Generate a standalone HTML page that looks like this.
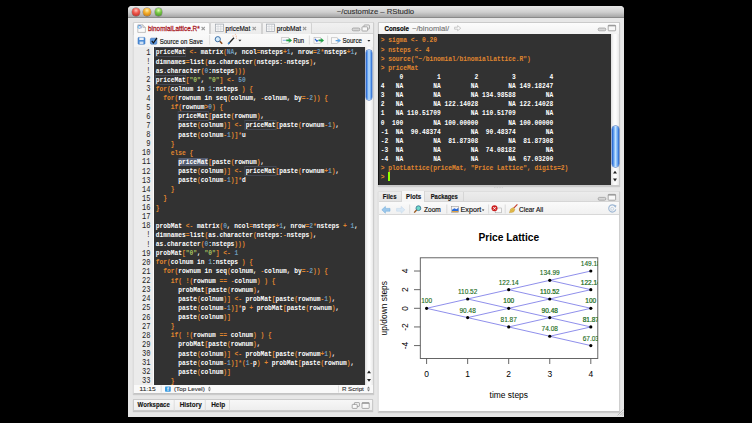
<!DOCTYPE html>
<html><head><meta charset="utf-8">
<style>
*{box-sizing:border-box}
html,body{margin:0;padding:0}
body{width:752px;height:423px;background:#000;position:relative;overflow:hidden;font-family:"Liberation Sans",sans-serif}
.a{position:absolute}
i{font-style:normal}
#win{left:128px;top:6px;width:496px;height:410.5px;background:#e7e7e7;border-radius:4px 4px 0 0}
#title{left:128px;top:6px;width:496px;height:11.6px;background:linear-gradient(#e6e6e6,#cfcfcf 55%,#a7a7a7);border-radius:4px 4px 0 0;border-bottom:1px solid #8a8a8a}
.btn{width:7.8px;height:7.8px;border-radius:50%;top:8px;box-shadow:0 0 0 0.4px rgba(0,0,0,.45)}
.pane{border:1px solid #cacaca}
.tab{height:12px;border:1px solid #d2d2d2;border-bottom:none;border-radius:2px 2px 0 0}
.mono{font-family:"Liberation Mono",monospace;font-size:6.25px;line-height:9.12px;white-space:pre}
.big pre{font-size:7.4px !important;transform:scaleX(0.8446);transform-origin:0 0}
#code{left:154px;top:46.8px;width:211px;height:337.8px;background:#323232;color:#fff;overflow:hidden;font-weight:bold}
#code pre{margin:0;padding:1.6px 0 0 2px;font:inherit}
#gutter{left:133.6px;top:46.8px;width:20.4px;height:337.8px;background:#ebebeb;border-right:1px solid #fbfbfb;color:#222;text-align:right;overflow:hidden}
#gutter pre{margin:0;padding:1.1px 0 0 0;font:inherit;font-size:8.2px;width:16.5px;text-align:right;font-weight:normal;transform:scaleX(0.86);transform-origin:100% 0}
.k{color:#E0862F}.n{color:#6C99BB}.s{color:#A5C261}
.bx{outline:0.8px solid rgba(90,100,126,.45)}
.sel{background:#555d71}
#console{left:378px;top:34px;width:233px;height:151px;background:#323232;color:#fff;overflow:hidden;font-weight:bold;border-left:1px solid #151515}
#console pre{margin:0;padding:2.4px 0 0 2.2px;font:inherit}
.sb{background:linear-gradient(90deg,#dedede,#fafafa 35%,#fdfdfd 60%,#e8e8e8)}
.thumb{border-radius:3.5px;background:linear-gradient(90deg,#1d58c8,#5c9cee 22%,#bfe0ff 50%,#6aa8f2 78%,#2260cc);box-shadow:0 0 0 0.4px #2a5ab0}
svg text{font-family:"Liberation Sans",sans-serif}
</style></head><body>
<div id="win" class="a"></div>
<div id="title" class="a"></div>
<div class="a btn" style="left:132.2px;background:radial-gradient(circle at 50% 30%,#ffc4bc 0,#f05a4e 40%,#b0201a 100%)"></div>
<div class="a btn" style="left:143.2px;background:radial-gradient(circle at 50% 30%,#fff0b0 0,#f6b02c 40%,#b86a0a 100%)"></div>
<div class="a btn" style="left:154.6px;background:radial-gradient(circle at 50% 30%,#e0ffb0 0,#7cc84a 40%,#3a8a1a 100%)"></div>

<!-- LEFT SOURCE PANE -->
<div class="a pane" style="left:133px;top:22px;width:240.5px;height:371.8px;background:#fafafa;box-shadow:0 1px 1px rgba(0,0,0,.12);border-color:#d8d8d8 #cdcdcd #c4c4c4 #dcdcdc"></div>
<div class="a" style="left:134px;top:23px;width:238.5px;height:10.6px;background:linear-gradient(#f1f1f1,#e9e9e9);border-bottom:1px solid #d2d2d2"></div>
<div class="a tab" style="left:133px;top:22px;width:77.2px;height:12.6px;background:linear-gradient(#fdfdfd,#f8f8f8)"></div>
<div class="a tab" style="left:210.2px;top:22.4px;width:51.4px;background:linear-gradient(#f4f4f4,#ebebeb)"></div>
<div class="a tab" style="left:261.6px;top:22.4px;width:50px;background:linear-gradient(#f4f4f4,#ebebeb)"></div>
<div class="a" style="left:134px;top:33.8px;width:238.5px;height:13px;background:linear-gradient(#fafafa,#f3f3f3)"></div>

<div id="gutter" class="a mono"><pre>1
!
!
2
3
4
5
6
7
8
9
10
11
12
13
14
15
16
17
18
!
!
19
20
21
22
23
24
25
26
27
28
29
30
31
32
33</pre></div>
<div id="code" class="a mono big"><pre><i class="bx">priceMat</i> <i class="k">&lt;-</i> matrix<i class="k">(</i><i class="n">NA</i>, ncol<i class="k">=</i>nsteps<i class="k">+</i><i class="n">1</i>, nrow<i class="k">=</i><i class="n">2</i><i class="k">*</i>nsteps<i class="k">+</i><i class="n">1</i>,
dimnames<i class="k">=</i>list<i class="k">(</i>as.character<i class="k">(</i>nsteps:<i class="k">-</i>nsteps<i class="k">)</i>,
as.character<i class="k">(</i><i class="n">0</i>:nsteps<i class="k">)</i><i class="k">)</i><i class="k">)</i>
<i class="bx">priceMat</i><i class="k">[</i><i class="s">&quot;0&quot;</i>, <i class="s">&quot;0&quot;</i><i class="k">]</i> <i class="k">&lt;-</i> <i class="n">50</i>
<i class="k">for</i><i class="k">(</i>colnum in <i class="n">1</i>:nsteps <i class="k">)</i> <i class="k">{</i>
  <i class="k">for</i><i class="k">(</i>rownum in seq<i class="k">(</i>colnum, <i class="k">-</i>colnum, by<i class="k">=</i><i class="k">-</i><i class="n">2</i><i class="k">)</i><i class="k">)</i> <i class="k">{</i>
    <i class="k">if</i><i class="k">(</i>rownum<i class="k">&gt;</i><i class="n">0</i><i class="k">)</i> <i class="k">{</i>
      <i class="bx">priceMat</i><i class="k">[</i>paste<i class="k">(</i>rownum<i class="k">)</i>,
      paste<i class="k">(</i>colnum<i class="k">)</i><i class="k">]</i> <i class="k">&lt;-</i> <i class="bx">priceMat</i><i class="k">[</i>paste<i class="k">(</i>rownum<i class="k">-</i><i class="n">1</i><i class="k">)</i>,
      paste<i class="k">(</i>colnum<i class="k">-</i><i class="n">1</i><i class="k">)</i><i class="k">]</i><i class="k">*</i>u
    <i class="k">}</i>
    <i class="k">else</i> <i class="k">{</i>
      <i class="sel">priceMat</i><i class="k">[</i>paste<i class="k">(</i>rownum<i class="k">)</i>,
      paste<i class="k">(</i>colnum<i class="k">)</i><i class="k">]</i> <i class="k">&lt;-</i> <i class="bx">priceMat</i><i class="k">[</i>paste<i class="k">(</i>rownum<i class="k">+</i><i class="n">1</i><i class="k">)</i>,
      paste<i class="k">(</i>colnum<i class="k">-</i><i class="n">1</i><i class="k">)</i><i class="k">]</i><i class="k">*</i>d
    <i class="k">}</i>
  <i class="k">}</i>
<i class="k">}</i>

probMat <i class="k">&lt;-</i> matrix<i class="k">(</i><i class="n">0</i>, ncol<i class="k">=</i>nsteps<i class="k">+</i><i class="n">1</i>, nrow<i class="k">=</i><i class="n">2</i><i class="k">*</i>nsteps <i class="k">+</i> <i class="n">1</i>,
dimnames<i class="k">=</i>list<i class="k">(</i>as.character<i class="k">(</i>nsteps:<i class="k">-</i>nsteps<i class="k">)</i>,
as.character<i class="k">(</i><i class="n">0</i>:nsteps<i class="k">)</i><i class="k">)</i><i class="k">)</i>
probMat<i class="k">[</i><i class="s">&quot;0&quot;</i>, <i class="s">&quot;0&quot;</i><i class="k">]</i> <i class="k">&lt;-</i> <i class="n">1</i>
<i class="k">for</i><i class="k">(</i>colnum in <i class="n">1</i>:nsteps <i class="k">)</i> <i class="k">{</i>
  <i class="k">for</i><i class="k">(</i>rownum in seq<i class="k">(</i>colnum, <i class="k">-</i>colnum, by<i class="k">=</i><i class="k">-</i><i class="n">2</i><i class="k">)</i><i class="k">)</i> <i class="k">{</i>
    <i class="k">if</i><i class="k">(</i> <i class="k">!</i><i class="k">(</i>rownum <i class="k">==</i> <i class="k">-</i>colnum<i class="k">)</i> <i class="k">)</i> <i class="k">{</i>
      probMat<i class="k">[</i>paste<i class="k">(</i>rownum<i class="k">)</i>,
      paste<i class="k">(</i>colnum<i class="k">)</i><i class="k">]</i> <i class="k">&lt;-</i> probMat<i class="k">[</i>paste<i class="k">(</i>rownum<i class="k">-</i><i class="n">1</i><i class="k">)</i>,
      paste<i class="k">(</i>colnum<i class="k">-</i><i class="n">1</i><i class="k">)</i><i class="k">]</i><i class="k">*</i>p <i class="k">+</i> probMat<i class="k">[</i>paste<i class="k">(</i>rownum<i class="k">)</i>,
      paste<i class="k">(</i>colnum<i class="k">)</i><i class="k">]</i>
    <i class="k">}</i>
    <i class="k">if</i><i class="k">(</i> <i class="k">!</i><i class="k">(</i>rownum <i class="k">==</i> colnum<i class="k">)</i> <i class="k">)</i> <i class="k">{</i>
      probMat<i class="k">[</i>paste<i class="k">(</i>rownum<i class="k">)</i>,
      paste<i class="k">(</i>colnum<i class="k">)</i><i class="k">]</i> <i class="k">&lt;-</i> probMat<i class="k">[</i>paste<i class="k">(</i>rownum<i class="k">+</i><i class="n">1</i><i class="k">)</i>,
      paste<i class="k">(</i>colnum<i class="k">-</i><i class="n">1</i><i class="k">)</i><i class="k">]</i><i class="k">*</i><i class="k">(</i><i class="n">1</i><i class="k">-</i>p<i class="k">)</i> <i class="k">+</i> probMat<i class="k">[</i>paste<i class="k">(</i>rownum<i class="k">)</i>,
      paste<i class="k">(</i>colnum<i class="k">)</i><i class="k">]</i>
    <i class="k">}</i></pre></div>
<div class="a sb" style="left:365px;top:46.8px;width:8px;height:337.8px"></div>
<div class="a thumb" style="left:365.8px;top:50px;width:6.6px;height:49.6px"></div>
<!-- status bar -->
<div class="a" style="left:134px;top:384.6px;width:238.5px;height:8.6px;background:#f9f9f9"></div>

<!-- BOTTOM LEFT (workspace) -->
<div class="a pane" style="left:133px;top:399.4px;width:240px;height:12px;background:linear-gradient(#f7f7f7,#eeeeee);box-shadow:0 1px 1px rgba(0,0,0,.15)"></div>

<!-- CONSOLE PANE -->
<div class="a pane" style="left:377.6px;top:22px;width:242px;height:164px;background:#fafafa;box-shadow:0 1px 1px rgba(0,0,0,.12)"></div>
<div class="a" style="left:378.6px;top:23px;width:240px;height:11px;background:linear-gradient(#fcfcfc,#f2f2f2)"></div>
<div id="console" class="a mono big"><pre><i class="k">&gt; sigma &lt;- 0.20</i>
<i class="k">&gt; nsteps &lt;- 4</i>
<i class="k">&gt; source(&quot;~/binomial/binomialLattice.R&quot;)</i>
<i class="k">&gt; priceMat</i>
     0         1         2         3         4
4   NA        NA        NA        NA 149.18247
3   NA        NA        NA 134.98588        NA
2   NA        NA 122.14028        NA 122.14028
1   NA 110.51709        NA 110.51709        NA
0  100        NA 100.00000        NA 100.00000
-1  NA  90.48374        NA  90.48374        NA
-2  NA        NA  81.87308        NA  81.87308
-3  NA        NA        NA  74.08182        NA
-4  NA        NA        NA        NA  67.03200
<i class="k">&gt; plotLattice(priceMat, "Price Lattice", digits=2)</i>
<i class="k">&gt; </i></pre></div>
<div class="a sb" style="left:611px;top:34px;width:8.4px;height:151px"></div>
<div class="a thumb" style="left:611.8px;top:126px;width:6.8px;height:41.4px"></div>
<div class="a" style="left:388.4px;top:172.3px;width:1.3px;height:8.7px;background:#91ff00"></div>

<!-- PLOTS PANE -->
<div class="a pane" style="left:377.6px;top:190.8px;width:242px;height:220.8px;background:#fff;box-shadow:0 1px 1px rgba(0,0,0,.12);border-color:#dedede #cfcfcf #c4c4c4 #e2e2e2"></div>
<div class="a" style="left:378.6px;top:191.8px;width:240px;height:10.6px;background:linear-gradient(#ececec,#e4e4e4);border-bottom:1px solid #d6d6d6"></div>
<div class="a" style="left:401.3px;top:191.4px;width:24px;height:11.6px;background:#f6f6f6;border-left:1px solid #d6d6d6;border-right:1px solid #d6d6d6"></div>
<div class="a" style="left:378.6px;top:202.4px;width:240px;height:12.6px;background:linear-gradient(#fafafa,#f1f1f1);border-bottom:1px solid #d8d8d8"></div>
<div class="a" style="left:463.2px;top:191.8px;width:1px;height:10.6px;background:#d6d6d6"></div>

<svg class="a" style="left:0;top:0" width="752" height="423" viewBox="0 0 752 423">
<text x="375.5" y="14.4" font-size="7.8" font-weight="normal" fill="#333" text-anchor="middle" textLength="77.3" lengthAdjust="spacingAndGlyphs" stroke="#333" stroke-width="0.15" >~/customize – RStudio</text>
<text x="148" y="30.8" font-size="7.0" font-weight="normal" fill="#a8161e" text-anchor="start" textLength="51.7" lengthAdjust="spacingAndGlyphs" stroke="#a8161e" stroke-width="0.26" >binomialLattice.R*</text>
<text x="225.6" y="31" font-size="7.0" font-weight="normal" fill="#111" text-anchor="start" textLength="24.6" lengthAdjust="spacingAndGlyphs" stroke="#111" stroke-width="0.16" >priceMat</text>
<text x="276.8" y="31" font-size="7.0" font-weight="normal" fill="#111" text-anchor="start" textLength="24.2" lengthAdjust="spacingAndGlyphs" stroke="#111" stroke-width="0.16" >probMat</text>
<path d="M201.6 27 l3.2 3.2 M204.79999999999998 27 l-3.2 3.2" stroke="#9a9a9a" stroke-width="1.1"/>
<path d="M252.6 27 l3.2 3.2 M255.79999999999998 27 l-3.2 3.2" stroke="#9a9a9a" stroke-width="1.1"/>
<path d="M303.0 27 l3.2 3.2 M306.20000000000005 27 l-3.2 3.2" stroke="#9a9a9a" stroke-width="1.1"/>
<path d="M137.8 24.8 h5 l2.6 2.6 v5 h-7.6 z" fill="#fbfbfb" stroke="#9a9a9a" stroke-width="0.6"/>
<path d="M142.8 24.8 v2.6 h2.6" fill="#e0e0e0" stroke="#9a9a9a" stroke-width="0.5"/>
<circle cx="139.6" cy="27" r="2.1" fill="#5b8fd0"/><text x="139.6" y="28.6" font-size="3.6" font-weight="bold" fill="#fff" text-anchor="middle">R</text>
<rect x="215.4" y="24.1" width="8" height="7.4" fill="#f8f8f8" stroke="#9aa0a8" stroke-width="0.7"/>
<path d="M218.07 24.1 v7.4 M220.73000000000002 24.1 v7.4 M215.4 26.6 h8 M215.4 29 h8" stroke="#c4c8ce" stroke-width="0.5"/>
<rect x="266.4" y="24.1" width="8" height="7.4" fill="#f8f8f8" stroke="#9aa0a8" stroke-width="0.7"/>
<path d="M269.07 24.1 v7.4 M271.72999999999996 24.1 v7.4 M266.4 26.6 h8 M266.4 29 h8" stroke="#c4c8ce" stroke-width="0.5"/>
<rect x="352.2" y="28" width="7.6" height="2.8" rx="1.2" fill="#d6d6d6" stroke="#8a8a8a" stroke-width="0.6"/>
<rect x="364" y="25" width="5.4" height="4" rx="0.6" fill="#f4f4f4" stroke="#8a8a8a" stroke-width="0.7"/>
<rect x="362" y="26.8" width="5.6" height="4.2" rx="0.6" fill="#f8f8f8" stroke="#8a8a8a" stroke-width="0.7"/>
<rect x="138" y="37.4" width="7" height="6.8" rx="0.8" fill="#4f8fd8" stroke="#2f6ab8" stroke-width="0.5"/>
<rect x="139.3" y="37.6" width="4.4" height="2.4" fill="#eaf2fb"/><rect x="139.6" y="41.6" width="3.8" height="2.4" fill="#cfe0f4"/>
<rect x="150.4" y="38.2" width="6.4" height="6" rx="1" fill="#5d97dd" stroke="#3d6fb2" stroke-width="0.6"/>
<path d="M151.8 40.8 l1.6 2.2 l3.6 -5.2" fill="none" stroke="#111" stroke-width="1.2"/>
<text x="159.7" y="43.9" font-size="7.0" font-weight="normal" fill="#111" text-anchor="start" textLength="43.1" lengthAdjust="spacingAndGlyphs" stroke="#111" stroke-width="0.16" >Source on Save</text>
<line x1="209.6" y1="35" x2="209.6" y2="44.5" stroke="#d4d4d4" stroke-width="0.8"/>
<line x1="309.4" y1="35.5" x2="309.4" y2="44.5" stroke="#d4d4d4" stroke-width="0.8"/>
<line x1="327.6" y1="35.5" x2="327.6" y2="44.5" stroke="#d4d4d4" stroke-width="0.8"/>
<circle cx="217.8" cy="39.2" r="2.6" fill="#d6ecfb" stroke="#3d6fa8" stroke-width="1"/>
<line x1="219.8" y1="41.2" x2="222.2" y2="43.8" stroke="#8a4a1a" stroke-width="1.5"/>
<line x1="228.2" y1="44" x2="234" y2="37.8" stroke="#222" stroke-width="1.3"/>
<line x1="228.2" y1="44" x2="229.6" y2="42.5" stroke="#3a8ee0" stroke-width="1.4"/>
<path d="M233 35.5 v1.2 M235.6 36.2 h1.4 M234.8 35 l1 -0.8 M236 38.2 h1" stroke="#f09a6a" stroke-width="0.7"/>
<path d="M238.4 39.8 h3 l-1.5 1.8 z" fill="#222"/>
<rect x="281.8" y="37.4" width="6.6" height="5.8" fill="#fafafa" stroke="#a8a8a8" stroke-width="0.5"/>
<line x1="282.8" y1="40.3" x2="286" y2="40.3" stroke="#6aa0e0" stroke-width="0.8"/>
<path d="M286.2 39.6 h3 v-1.6 l2.8 2.4 l-2.8 2.4 v-1.6 h-3 z" fill="#21a046"/>
<text x="293.2" y="43" font-size="7.0" font-weight="normal" fill="#111" text-anchor="start" textLength="10.8" lengthAdjust="spacingAndGlyphs" stroke="#111" stroke-width="0.16" >Run</text>
<rect x="314" y="37.4" width="6.4" height="5.8" fill="#fafafa" stroke="#a8a8a8" stroke-width="0.5"/>
<path d="M315 38.8 l1.8 2.4 l1.6 -1" fill="none" stroke="#2a62d0" stroke-width="1.1"/>
<path d="M318.6 39.6 h2.6 v-1.6 l2.8 2.4 l-2.8 2.4 v-1.6 h-2.6 z" fill="#21a046"/>
<rect x="331.4" y="37.8" width="6.2" height="5.6" fill="#fafafa" stroke="#a8a8a8" stroke-width="0.5"/>
<path d="M335.6 40 h2.6 v-1.6 l2.8 2.2 l-2.8 2.2 v-1.6 h-2.6 z" fill="#5da4e6"/>
<text x="342.4" y="43.1" font-size="7.0" font-weight="normal" fill="#111" text-anchor="start" textLength="19.5" lengthAdjust="spacingAndGlyphs" stroke="#111" stroke-width="0.16" >Source</text>
<path d="M367.4 40 h3 l-1.5 1.8 z" fill="#222"/>
<text x="139.6" y="391.4" font-size="6.0" font-weight="normal" fill="#333" text-anchor="start" textLength="16" lengthAdjust="spacingAndGlyphs" stroke="#333" stroke-width="0.12" >11:15</text>
<line x1="161.2" y1="385.5" x2="161.2" y2="392.5" stroke="#d8d8d8" stroke-width="0.8"/>
<rect x="165" y="386.5" width="5.8" height="5.3" rx="0.8" fill="#3d9be0"/><text x="167.9" y="391" font-size="5" font-weight="bold" fill="#fff" text-anchor="middle">f</text>
<text x="174" y="391.4" font-size="6.0" font-weight="normal" fill="#333" text-anchor="start" textLength="30.8" lengthAdjust="spacingAndGlyphs" stroke="#333" stroke-width="0.12" >(Top Level)</text>
<path d="M207.9 388.6 l1.5 -2 l1.5 2 z M207.9 389.6 l1.5 2 l1.5 -2 z" fill="#777"/>
<line x1="338.5" y1="385.5" x2="338.5" y2="392.5" stroke="#d8d8d8" stroke-width="0.8"/>
<text x="341.9" y="391.4" font-size="6.0" font-weight="normal" fill="#333" text-anchor="start" textLength="21.9" lengthAdjust="spacingAndGlyphs" stroke="#333" stroke-width="0.12" >R Script</text>
<path d="M367 388.6 l1.5 -2 l1.5 2 z M367 389.6 l1.5 2 l1.5 -2 z" fill="#777"/>
<path d="M367 373.2 l2 -2.8 l2 2.8 z M367 379 l2 2.8 l2 -2.8 z" fill="#222"/>
<text x="137.6" y="406.9" font-size="6.6" font-weight="bold" fill="#111" text-anchor="start" textLength="32.2" lengthAdjust="spacingAndGlyphs" stroke="#111" stroke-width="0.12" >Workspace</text>
<text x="179.7" y="406.9" font-size="6.6" font-weight="bold" fill="#111" text-anchor="start" textLength="22" lengthAdjust="spacingAndGlyphs" stroke="#111" stroke-width="0.12" >History</text>
<text x="211.2" y="406.9" font-size="6.6" font-weight="bold" fill="#111" text-anchor="start" textLength="13.9" lengthAdjust="spacingAndGlyphs" stroke="#111" stroke-width="0.12" >Help</text>
<line x1="174.2" y1="399.8" x2="174.2" y2="410.6" stroke="#dadada" stroke-width="0.9"/>
<line x1="205.3" y1="399.8" x2="205.3" y2="410.6" stroke="#dadada" stroke-width="0.9"/>
<line x1="229.5" y1="399.8" x2="229.5" y2="410.6" stroke="#dadada" stroke-width="0.9"/>
<rect x="354.4" y="402.6" width="5" height="3.8" rx="0.5" fill="#f6f6f6" stroke="#8a8a8a" stroke-width="0.7"/>
<rect x="352.2" y="404.4" width="5" height="4" rx="0.5" fill="#fafafa" stroke="#8a8a8a" stroke-width="0.7"/>
<rect x="362" y="402.6" width="7.2" height="5.8" rx="0.6" fill="#f8f8f8" stroke="#8a8a8a" stroke-width="0.7"/><line x1="362" y1="403.2" x2="369.2" y2="403.2" stroke="#8a8a8a" stroke-width="1"/>
<text x="384.4" y="30.6" font-size="7.0" font-weight="bold" fill="#000" text-anchor="start" textLength="24.5" lengthAdjust="spacingAndGlyphs" stroke="#000" stroke-width="0.15" >Console</text>
<text x="412" y="30.6" font-size="7.2" font-weight="normal" fill="#707070" text-anchor="start" textLength="37" lengthAdjust="spacingAndGlyphs" stroke="#707070" stroke-width="0.1" >~/binomial/</text>
<path d="M454.6 29.2 h3 v1.6 l3.2 -2.6 l-3.2 -2.6 v1.6 h-3 z" fill="none" stroke="#b8b8b8" stroke-width="0.7"/>
<rect x="598.2" y="28" width="7.6" height="2.8" rx="1.2" fill="#d6d6d6" stroke="#8a8a8a" stroke-width="0.6"/>
<rect x="608.2" y="25.2" width="7.4" height="5.6" rx="0.6" fill="#f8f8f8" stroke="#8a8a8a" stroke-width="0.7"/><line x1="608.2" y1="25.8" x2="615.6" y2="25.8" stroke="#8a8a8a" stroke-width="1"/>
<path d="M613 173.6 l2 -2.8 l2 2.8 z M613 178.6 l2 2.8 l2 -2.8 z" fill="#222"/>
<text x="382.8" y="198.8" font-size="6.8" font-weight="bold" fill="#111" text-anchor="start" textLength="13.7" lengthAdjust="spacingAndGlyphs" stroke="#111" stroke-width="0.12" >Files</text>
<text x="406.1" y="198.8" font-size="6.8" font-weight="bold" fill="#111" text-anchor="start" textLength="15" lengthAdjust="spacingAndGlyphs" stroke="#111" stroke-width="0.12" >Plots</text>
<text x="430.7" y="198.8" font-size="6.8" font-weight="bold" fill="#111" text-anchor="start" textLength="27.2" lengthAdjust="spacingAndGlyphs" stroke="#111" stroke-width="0.12" >Packages</text>
<rect x="598.2" y="197.4" width="7.6" height="2.8" rx="1.2" fill="#d6d6d6" stroke="#8a8a8a" stroke-width="0.6"/>
<rect x="608.2" y="194.4" width="7.4" height="5.8" rx="0.6" fill="#f8f8f8" stroke="#8a8a8a" stroke-width="0.7"/><line x1="608.2" y1="195" x2="615.6" y2="195" stroke="#8a8a8a" stroke-width="1"/>
<path d="M381.8 209.8 l3.6 -3.4 v2 h4.6 v2.8 h-4.6 v2 z" fill="#9cc8ec" stroke="#6aa6d8" stroke-width="0.5"/>
<path d="M404.8 209.8 l-3.6 -3.4 v2 h-4.6 v2.8 h4.6 v2 z" fill="#dbe9f5" stroke="#c0d6ea" stroke-width="0.5"/>
<line x1="409.7" y1="204.5" x2="409.7" y2="213.5" stroke="#d4d4d4" stroke-width="0.8"/>
<circle cx="418.4" cy="208.2" r="2.4" fill="#6fd8c8" stroke="#3a7a9a" stroke-width="0.9"/>
<line x1="416.6" y1="210" x2="414.2" y2="212.6" stroke="#9a5a20" stroke-width="1.4"/>
<text x="424" y="211.7" font-size="7.0" font-weight="normal" fill="#111" text-anchor="start" textLength="16.8" lengthAdjust="spacingAndGlyphs" stroke="#111" stroke-width="0.16" >Zoom</text>
<line x1="446.8" y1="204.5" x2="446.8" y2="213.5" stroke="#d4d4d4" stroke-width="0.8"/>
<rect x="451.4" y="206.6" width="7.2" height="6" fill="#f4f4f4" stroke="#8a8a8a" stroke-width="0.5"/><path d="M452 209.8 l2.4 -1.6 l2 1 l2 -1.4 v3.8 h-6.4 z" fill="#2a6ad8"/><rect x="452" y="211.2" width="6.2" height="0.9" fill="#f0a020"/>
<text x="460.6" y="211.7" font-size="7.0" font-weight="normal" fill="#111" text-anchor="start" textLength="20.7" lengthAdjust="spacingAndGlyphs" stroke="#111" stroke-width="0.16" >Export</text>
<path d="M481.8 209.6 h2.6 l-1.3 1.5 z" fill="#222"/>
<line x1="488.6" y1="204.5" x2="488.6" y2="213.5" stroke="#d4d4d4" stroke-width="0.8"/>
<rect x="495.2" y="208" width="6.4" height="4.8" fill="#fafafa" stroke="#9a9a9a" stroke-width="0.5"/>
<circle cx="494.5" cy="208.3" r="3" fill="#cc1f1f"/><path d="M493.3 207.1 l2.4 2.4 M495.7 207.1 l-2.4 2.4" stroke="#fff" stroke-width="1"/>
<line x1="505.2" y1="204.5" x2="505.2" y2="213.5" stroke="#d4d4d4" stroke-width="0.8"/>
<line x1="513.2" y1="208.6" x2="517.4" y2="204.4" stroke="#c23a2a" stroke-width="1.1"/>
<path d="M509.4 212.8 l1.2 -3.8 l2.6 -1.4 l1.8 1.8 l-1.4 2.6 z" fill="#e6bf4e" stroke="#b8902e" stroke-width="0.4"/><path d="M510.6 211.6 l2.6 -2.6 M511.6 212.2 l2.2 -2.2" stroke="#c89a30" stroke-width="0.4"/>
<text x="519.1" y="211.7" font-size="7.0" font-weight="normal" fill="#111" text-anchor="start" textLength="24" lengthAdjust="spacingAndGlyphs" stroke="#111" stroke-width="0.16" >Clear All</text>
<path d="M615.4 206.6 A3.6 3.6 0 1 0 615.8 209.4" fill="none" stroke="#9fb8d4" stroke-width="1.1"/><path d="M613.6 205 l2.8 0.2 l-0.6 2.8 z" fill="#9fb8d4"/><circle cx="612.2" cy="208.8" r="1.5" fill="none" stroke="#b4c8de" stroke-width="0.7"/>
<path d="M617.6 415.4 l6 -6 M620 415.4 l3.6 -3.6 M622.2 415.4 l1.4 -1.4" stroke="#9a9a9a" stroke-width="0.6"/>
<path d="M494 187.6 h9" stroke="#bdbdbd" stroke-width="0.6" stroke-dasharray="0.8 0.8"/>
 <text x="508.8" y="240.8" font-size="10.2" font-weight="bold" text-anchor="middle" fill="#000">Price Lattice</text>
 <text x="508.8" y="398" font-size="8.45" text-anchor="middle" fill="#000">time steps</text>
 <rect x="420.3" y="257.8" width="177.5" height="100.7" fill="none" stroke="#555" stroke-width="0.9"/>
 <g stroke="#555" stroke-width="0.9">
  <line x1="426.60" y1="358.5" x2="426.60" y2="364"/><line x1="467.65" y1="358.5" x2="467.65" y2="364"/><line x1="508.70" y1="358.5" x2="508.70" y2="364"/><line x1="549.75" y1="358.5" x2="549.75" y2="364"/><line x1="590.80" y1="358.5" x2="590.80" y2="364"/><line x1="414" y1="345.58" x2="420.3" y2="345.58"/><line x1="414" y1="326.94" x2="420.3" y2="326.94"/><line x1="414" y1="308.30" x2="420.3" y2="308.30"/><line x1="414" y1="289.66" x2="420.3" y2="289.66"/><line x1="414" y1="271.02" x2="420.3" y2="271.02"/></g><g fill="#000" font-size="8.45" text-anchor="middle"><text x="426.60" y="377.4">0</text><text x="467.65" y="377.4">1</text><text x="508.70" y="377.4">2</text><text x="549.75" y="377.4">3</text><text x="590.80" y="377.4">4</text><text transform="translate(408.0,345.58) rotate(-90)" x="0" y="0">-4</text><text transform="translate(408.0,326.94) rotate(-90)" x="0" y="0">-2</text><text transform="translate(408.0,308.30) rotate(-90)" x="0" y="0">0</text><text transform="translate(408.0,289.66) rotate(-90)" x="0" y="0">2</text><text transform="translate(408.0,271.02) rotate(-90)" x="0" y="0">4</text><text transform="translate(387.3,308.2) rotate(-90)" x="0" y="0">up/down steps</text>
 </g>
 <g stroke="#7272e6" stroke-width="0.8"><line x1="426.60" y1="308.30" x2="467.65" y2="298.98"/><line x1="426.60" y1="308.30" x2="467.65" y2="317.62"/><line x1="467.65" y1="298.98" x2="508.70" y2="289.66"/><line x1="467.65" y1="298.98" x2="508.70" y2="308.30"/><line x1="467.65" y1="317.62" x2="508.70" y2="308.30"/><line x1="467.65" y1="317.62" x2="508.70" y2="326.94"/><line x1="508.70" y1="289.66" x2="549.75" y2="280.34"/><line x1="508.70" y1="289.66" x2="549.75" y2="298.98"/><line x1="508.70" y1="308.30" x2="549.75" y2="298.98"/><line x1="508.70" y1="308.30" x2="549.75" y2="317.62"/><line x1="508.70" y1="326.94" x2="549.75" y2="317.62"/><line x1="508.70" y1="326.94" x2="549.75" y2="336.26"/><line x1="549.75" y1="280.34" x2="590.80" y2="271.02"/><line x1="549.75" y1="280.34" x2="590.80" y2="289.66"/><line x1="549.75" y1="298.98" x2="590.80" y2="289.66"/><line x1="549.75" y1="298.98" x2="590.80" y2="308.30"/><line x1="549.75" y1="317.62" x2="590.80" y2="308.30"/><line x1="549.75" y1="317.62" x2="590.80" y2="326.94"/><line x1="549.75" y1="336.26" x2="590.80" y2="326.94"/><line x1="549.75" y1="336.26" x2="590.80" y2="345.58"/></g>
 <g fill="#000"><circle cx="426.60" cy="308.30" r="1.6"/><circle cx="467.65" cy="298.98" r="1.6"/><circle cx="467.65" cy="317.62" r="1.6"/><circle cx="508.70" cy="289.66" r="1.6"/><circle cx="508.70" cy="308.30" r="1.6"/><circle cx="508.70" cy="326.94" r="1.6"/><circle cx="549.75" cy="280.34" r="1.6"/><circle cx="549.75" cy="298.98" r="1.6"/><circle cx="549.75" cy="317.62" r="1.6"/><circle cx="549.75" cy="336.26" r="1.6"/><circle cx="590.80" cy="271.02" r="1.6"/><circle cx="590.80" cy="289.66" r="1.6"/><circle cx="590.80" cy="308.30" r="1.6"/><circle cx="590.80" cy="326.94" r="1.6"/><circle cx="590.80" cy="345.58" r="1.6"/></g>
 <svg x="420.3" y="250" width="177.5" height="110" overflow="hidden"><g transform="translate(-420.3,-250)" fill="#176a17" stroke="#176a17" stroke-width="0.12" font-size="6.5" text-anchor="middle"><text x="426.60" y="303.40">100</text><text x="467.65" y="294.08">110.52</text><text x="467.65" y="312.72">90.48</text><text x="508.70" y="284.76">122.14</text><text x="508.70" y="303.40" stroke-width="0.22">100</text><text x="508.70" y="322.04">81.87</text><text x="549.75" y="275.44">134.99</text><text x="549.75" y="294.08" stroke-width="0.22">110.52</text><text x="549.75" y="312.72" stroke-width="0.22">90.48</text><text x="549.75" y="331.36">74.08</text><text x="590.80" y="266.12">149.18</text><text x="590.80" y="284.76" stroke-width="0.22">122.14</text><text x="590.80" y="303.40" stroke-width="0.22">100</text><text x="590.80" y="322.04" stroke-width="0.22">81.87</text><text x="590.80" y="340.68">67.03</text></g></svg>
</svg>

</body></html>
